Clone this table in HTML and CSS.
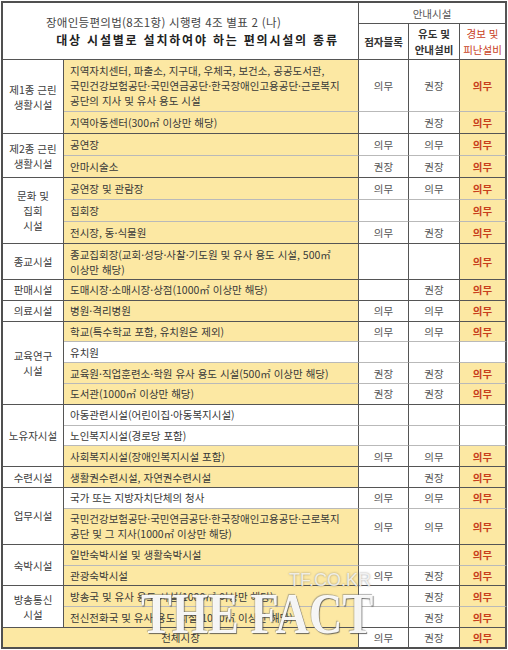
FILE: index.html
```html
<!DOCTYPE html>
<html lang="ko">
<head>
<meta charset="utf-8">
<title>편의시설의 종류</title>
<link rel="stylesheet" href="styles.css">
</head>
<body>
<div class="page">
<table class="grid">
<colgroup><col class="c-cat"><col class="c-item"><col class="c-a"><col class="c-b"><col class="c-c"></colgroup>
<thead>
<tr class="hr1">
<th colspan="2" rowspan="2" class="title"><div class="t1">장애인등편의법(8조1항) 시행령 4조 별표 2 (나)</div><div class="t2">대상 시설별로 설치하여야 하는 편의시설의 종류</div></th>
<th colspan="3" class="guide">안내시설</th>
</tr>
<tr class="hr2">
<th class="sub">점자블록</th>
<th class="sub">유도 및<br>안내설비</th>
<th class="sub red">경보 및<br>피난설비</th>
</tr>
</thead>
<tbody>
<tr class="h3">
<td class="cat end" rowspan="2">제1종 근린<br>생활시설</td>
<td class="item y">지역자치센터, 파출소, 지구대, 우체국, 보건소, 공공도서관,<br>국민건강보험공단·국민연금공단·한국장애인고용공단·근로복지<br>공단의 지사 및 유사 용도 시설</td>
<td class="v">의무</td><td class="v">권장</td><td class="m">의무</td>
</tr>
<tr class="hw end">
<td class="item y">지역아동센터(300㎡ 이상만 해당)</td>
<td class="v"></td><td class="v">권장</td><td class="m">의무</td>
</tr>
<tr class="hw">
<td class="cat end" rowspan="2">제2종 근린<br>생활시설</td>
<td class="item y">공연장</td>
<td class="v">의무</td><td class="v">의무</td><td class="m">의무</td>
</tr>
<tr class="hw end">
<td class="item y">안마시술소</td>
<td class="v">권장</td><td class="v">권장</td><td class="m">의무</td>
</tr>
<tr class="hw">
<td class="cat end" rowspan="3">문화 및<br>집회<br>시설</td>
<td class="item y">공연장 및 관람장</td>
<td class="v">의무</td><td class="v">의무</td><td class="m">의무</td>
</tr>
<tr class="hw">
<td class="item y">집회장</td>
<td class="v"></td><td class="v"></td><td class="m">의무</td>
</tr>
<tr class="hw end">
<td class="item y">전시장, 동·식물원</td>
<td class="v">의무</td><td class="v">권장</td><td class="m">의무</td>
</tr>
<tr class="h2 end">
<td class="cat">종교시설</td>
<td class="item y">종교집회장(교회·성당·사찰·기도원 및 유사 용도 시설, 500㎡<br>이상만 해당)</td>
<td class="v"></td><td class="v"></td><td class="m">의무</td>
</tr>
<tr class="h1 end">
<td class="cat">판매시설</td>
<td class="item y">도매시장·소매시장·상점(1000㎡ 이상만 해당)</td>
<td class="v"></td><td class="v">권장</td><td class="m">의무</td>
</tr>
<tr class="h1 end">
<td class="cat">의료시설</td>
<td class="item y">병원·격리병원</td>
<td class="v">의무</td><td class="v">의무</td><td class="m">의무</td>
</tr>
<tr class="h1">
<td class="cat end" rowspan="4">교육연구<br>시설</td>
<td class="item y">학교(특수학교 포함, 유치원은 제외)</td>
<td class="v">의무</td><td class="v">의무</td><td class="m">의무</td>
</tr>
<tr class="h1">
<td class="item">유치원</td>
<td class="v"></td><td class="v"></td><td class="v"></td>
</tr>
<tr class="h1">
<td class="item y">교육원·직업훈련소·학원 유사 용도 시설(500㎡ 이상만 해당)</td>
<td class="v">권장</td><td class="v">권장</td><td class="m">의무</td>
</tr>
<tr class="h1 end">
<td class="item y">도서관(1000㎡ 이상만 해당)</td>
<td class="v">권장</td><td class="v">권장</td><td class="m">의무</td>
</tr>
<tr class="h1">
<td class="cat end" rowspan="3">노유자시설</td>
<td class="item">아동관련시설(어린이집·아동복지시설)</td>
<td class="v"></td><td class="v"></td><td class="v"></td>
</tr>
<tr class="h1">
<td class="item">노인복지시설(경로당 포함)</td>
<td class="v"></td><td class="v"></td><td class="v"></td>
</tr>
<tr class="h1 end">
<td class="item y">사회복지시설(장애인복지시설 포함)</td>
<td class="v">의무</td><td class="v">의무</td><td class="m">의무</td>
</tr>
<tr class="h1 end">
<td class="cat">수련시설</td>
<td class="item y">생활권수련시설, 자연권수련시설</td>
<td class="v"></td><td class="v">권장</td><td class="m">의무</td>
</tr>
<tr class="h1">
<td class="cat end" rowspan="2">업무시설</td>
<td class="item">국가 또는 지방자치단체의 청사</td>
<td class="v">의무</td><td class="v">의무</td><td class="m">의무</td>
</tr>
<tr class="h2 end">
<td class="item y">국민건강보험공단·국민연금공단·한국장애인고용공단·근로복지<br>공단 및 그 지사(1000㎡ 이상만 해당)</td>
<td class="v">의무</td><td class="v">의무</td><td class="m">의무</td>
</tr>
<tr class="h1">
<td class="cat end" rowspan="2">숙박시설</td>
<td class="item y">일반숙박시설 및 생활숙박시설</td>
<td class="v"></td><td class="v"></td><td class="m">의무</td>
</tr>
<tr class="h1 end">
<td class="item y">관광숙박시설</td>
<td class="v">의무</td><td class="v">권장</td><td class="m">의무</td>
</tr>
<tr class="h1">
<td class="cat end" rowspan="2">방송통신<br>시설</td>
<td class="item y">방송국 및 유사 용도 시설(1000㎡ 이상만 해당)</td>
<td class="v"></td><td class="v">권장</td><td class="m">의무</td>
</tr>
<tr class="h1 end">
<td class="item y">전신전화국 및 유사 용도 시설(1000㎡ 이상만 해당)</td>
<td class="v"></td><td class="v">권장</td><td class="m">의무</td>
</tr>
<tr class="h1 last">
<td class="all y" colspan="2">전체시장</td>
<td class="v">의무</td><td class="v">권장</td><td class="m">의무</td>
</tr>
</tbody>
</table>
<div class="wm">
<span class="wm-site">TF.CO.KR</span>
<span class="wm-logo">THE FACT</span>
</div>
</div>
</body>
</html>
```
FILE: styles.css
```css
html, body {
  margin: 0;
  padding: 0;
  background: #ffffff;
}
body {
  font-family: "Noto Sans CJK KR", "Noto Sans", sans-serif;
  color: #333333;
}
.page {
  position: relative;
  width: 508px;
  height: 650px;
  padding: 1px 0 0 1px;
  box-sizing: border-box;
  overflow: hidden;
}
.grid {
  border-collapse: separate;
  border-spacing: 0;
  table-layout: fixed;
  width: 504px;
  border-top: 2px solid #505050;
  border-left: 2px solid #505050;
}
.c-cat { width: 61px; }
.c-item { width: 295px; }
.c-a { width: 50px; }
.c-b { width: 51px; }
.c-c { width: 47px; }
.grid th, .grid td {
  padding: 0;
  border-right: 1px solid #555555;
  border-bottom: 1px solid #b9b9b9;
  font-size: 10.5px;
  line-height: 15px;
  white-space: nowrap;
  overflow: hidden;
  box-sizing: border-box;
}
.grid th:last-child, .grid td:last-child {
  border-right-width: 2px;
}
.grid thead th {
  border-bottom: 1px solid #555555;
  background: #ffffff;
  font-weight: 400;
  text-align: center;
}
.hr1 { height: 21px; }
.hr2 { height: 36px; }
.title {
  color: #333333;
}
.t1 {
  font-size: 11.5px;
  line-height: 17px;
  letter-spacing: 0.3px;
  padding-right: 34px;
  color: #444444;
}
.t2 {
  font-size: 12px;
  line-height: 18px;
  font-weight: 700;
  letter-spacing: 1.8px;
  padding-left: 34px;
  color: #222222;
}
.grid thead th.guide {
  color: #555555;
  font-size: 10.5px;
}
.grid thead th.sub {
  font-weight: 700;
  color: #333333;
  line-height: 16px;
}
.grid thead th.sub.red {
  color: #c8401c;
  font-weight: 400;
}
.h3 { height: 52px; }
.hw { height: 22px; }
.h1 { height: 20.8px; }
.h2 { height: 36px; }
.grid tr.end td, .grid td.end {
  border-bottom-color: #555555;
}
.grid tr.last td {
  border-bottom: 2px solid #505050;
}
.cat {
  text-align: center;
  color: #404040;
  font-size: 10.5px;
  line-height: 15px;
  background: #ffffff;
}
.item {
  text-align: left;
  padding-left: 6px !important;
  color: #383838;
  line-height: 14px;
}
.y {
  background: #fce8a3;
}
.all {
  text-align: center;
  color: #383838;
}
.v {
  text-align: center;
  color: #555555;
  background: #ffffff;
}
.m {
  text-align: center;
  color: #c8401c;
  font-weight: 700;
  background: #fce8a3;
}
.wm {
  position: absolute;
  left: 141px;
  top: 566px;
  width: 226px;
  height: 80px;
  pointer-events: none;
}
.wm-site {
  position: absolute;
  left: 148px;
  top: 5px;
  font-family: "Liberation Sans", Arial, sans-serif;
  font-size: 18px;
  line-height: 18px;
  color: rgba(255, 255, 255, 0.8);
  text-shadow: 0 0 2px rgba(90, 90, 90, 0.65);
  white-space: nowrap;
}
.wm-logo {
  position: absolute;
  left: 0;
  top: 18px;
  font-family: "Liberation Serif", "Times New Roman", serif;
  font-weight: 700;
  font-size: 58px;
  line-height: 60px;
  color: rgba(255, 255, 255, 0.94);
  text-shadow: 1px 1px 1px rgba(70, 70, 70, 0.8), -1px -1px 1px rgba(120, 120, 120, 0.55);
  transform: scaleX(0.8);
  transform-origin: left top;
  white-space: nowrap;
}
```
